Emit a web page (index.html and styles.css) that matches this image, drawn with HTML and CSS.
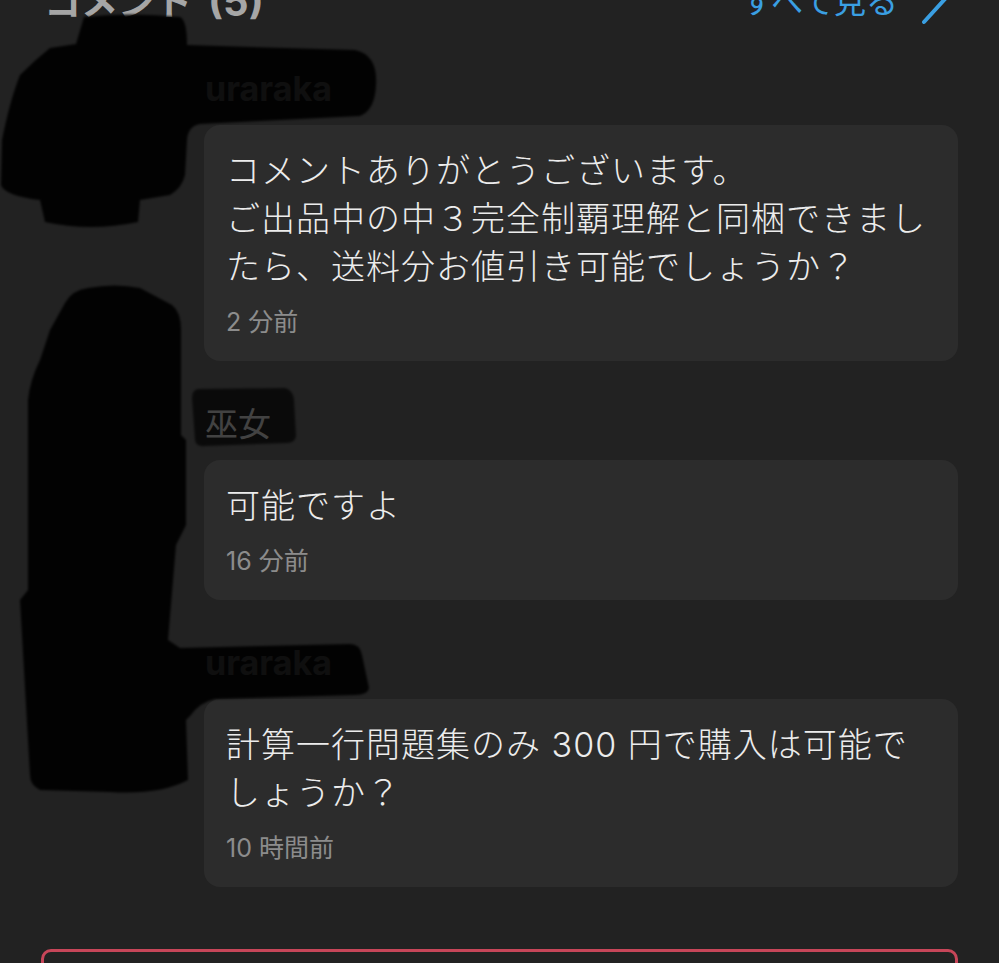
FILE: index.html
```html
<!DOCTYPE html>
<html lang="ja">
<head>
<meta charset="utf-8">
<title>コメント</title>
<link rel="stylesheet" href="styles.css">
</head>
<body>
<div class="page">
  <header class="header">
    <h2 class="title">コメント<span class="count">(5)</span></h2>
    <a class="see-all" href="#">
      <span>すべて見る</span>
      <svg class="chevron" width="28" height="56" viewBox="0 0 28 56"><path d="M4 5 L25 28 L4 51" fill="none" stroke="#3a9fe2" stroke-width="4" stroke-linecap="round" stroke-linejoin="round"/></svg>
    </a>
  </header>

  <div class="comments">
    <div class="comment">
      <div class="avatar"></div>
      <div class="content">
        <div class="username">uraraka</div>
        <div class="bubble">
          <p class="text">コメントありがとうございます。<br>ご出品中の中３完全制覇理解と同梱できまし<br>たら、送料分お値引き可能でしょうか？</p>
          <p class="time">2 分前</p>
        </div>
      </div>
    </div>

    <div class="comment">
      <div class="avatar"></div>
      <div class="content">
        <div class="username jp">巫女</div>
        <div class="bubble">
          <p class="text">可能ですよ</p>
          <p class="time">16 分前</p>
        </div>
      </div>
    </div>

    <div class="comment">
      <div class="avatar"></div>
      <div class="content">
        <div class="username">uraraka</div>
        <div class="bubble">
          <p class="text">計算一行問題集のみ 300 円で購入は可能で<br>しょうか？</p>
          <p class="time">10 時間前</p>
        </div>
      </div>
    </div>
  </div>

  <div class="input-box"></div>

  <svg class="redact" width="999" height="963" viewBox="0 0 999 963">
    <defs>
      <filter id="soft" x="-5%" y="-5%" width="110%" height="110%"><feGaussianBlur stdDeviation="1.2"/></filter>
    </defs>
    <g opacity="0.92" filter="url(#soft)">
      <path d="M84 17 Q130 12 180 17 Q187 20 187 45 L355 50 Q378 55 376 85 Q375 110 360 116 L200 124 Q188 126 187 140 L185 175 Q182 188 170 195 L140 200 L138 222 Q90 232 45 222 L40 200 Q5 196 1 185 L2 140 Q10 100 20 75 Q35 60 50 48 L76 44 Z" fill="#000"/>
      <path d="M88 288 Q115 283 140 288 L172 305 Q181 312 181 330 L181 435 L186 440 L186 525 L176 545 L168 640 L180 648 L350 644 Q360 644 362 655 L369 688 Q368 695 355 695 L215 699 Q200 702 190 716 L186 720 L188 780 Q160 795 110 792 L40 790 Q30 785 30 775 L20 600 L28 590 L28 400 Q30 380 40 360 L50 330 L65 303 Q72 290 88 288 Z" fill="#000"/>
    </g>
    <g opacity="0.68" filter="url(#soft)">
      <path d="M198 389 L285 388 Q293 390 294 400 L296 436 Q295 443 287 443 L205 446 Q196 447 195 440 L192 398 Q192 390 198 389 Z" fill="#000"/>
    </g>
  </svg>
</div>
</body>
</html>
```

FILE: styles.css
```css
html, body {
  margin: 0;
  padding: 0;
  overflow: hidden;
  background: #222222;
}

body {
  font-family: Inter, "Noto Sans CJK JP", "Noto Sans", sans-serif;
  color: #e6e6e6;
}

.page {
  position: relative;
  display: flex;
  flex-direction: column;
  padding: 0 41px;
  width: 999px;
  height: 963px;
  box-sizing: border-box;
  overflow: hidden;
}

.header {
  height: 44px;
  margin-top: -20px;
  display: flex;
  justify-content: space-between;
  align-items: center;
  flex: none;
}

.title {
  margin: 0;
  padding-left: 3px;
  font-size: 37px;
  line-height: 44px;
  font-weight: 700;
  color: #a6a6a6;
}

.count {
  margin-left: 16px;
  font-size: 40px;
  font-weight: 700;
}

.see-all {
  display: flex;
  align-items: center;
  gap: 22px;
  margin-right: 10px;
  font-size: 32px;
  line-height: 44px;
  color: #3a9fe2;
  text-decoration: none;
}

.chevron {
  display: block;
  flex: none;
  margin-top: -6px;
}

.comments {
  margin-top: 45px;
  display: flex;
  flex-direction: column;
  gap: 43px;
  flex: none;
}

.comment {
  display: grid;
  grid-template-columns: 163px 1fr;
}

.avatar {
  width: 88px;
  height: 88px;
  margin-left: 20px;
  border-radius: 50%;
}

.username {
  height: 40px;
  line-height: 40px;
  margin-bottom: 16px;
  padding-left: 1px;
  font-size: 34px;
  font-weight: 700;
  color: #c4c4c4;
}

.username.jp {
  font-size: 33px;
  font-weight: 400;
  color: #d0d0d0;
}

.bubble {
  background: #2c2c2c;
  border-radius: 16px;
  padding: 22px 22px 22px;
}

.text {
  margin: 0;
  font-size: 34px;
  font-weight: 300;
  line-height: 48px;
  letter-spacing: 1px;
  color: #ececec;
}

.time {
  margin: 14px 0 0;
  font-size: 25px;
  line-height: 34px;
  color: #8c8c8c;
}

.input-box {
  margin-top: 62px;
  height: 80px;
  flex: none;
  border: 3px solid #c74659;
  border-radius: 10px;
  box-sizing: border-box;
}

.redact {
  position: absolute;
  top: 0;
  left: 0;
  pointer-events: none;
}
```
